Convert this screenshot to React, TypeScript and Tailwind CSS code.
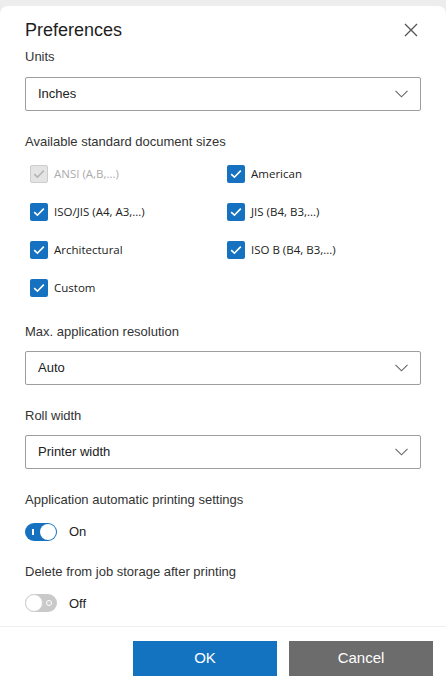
import React from "react";

const arial = { fontFamily: '"Liberation Sans", Arial, sans-serif' };
const segoe = { fontFamily: '"Open Sans", "Noto Sans", sans-serif' };

function Chevron() {
  return (
    <svg width="13" height="8" viewBox="0 0 13 8" fill="none">
      <path d="M0.5 0.8 L6.5 6.8 L12.5 0.8" stroke="#666" strokeWidth="1.1" />
    </svg>
  );
}

function Select({ value }: { value: string }) {
  return (
    <div className="flex h-[34px] items-center justify-between rounded-[2px] border border-[#9d9d9d] bg-white pl-[12px] pr-[12px]">
      <span className="text-[13px] text-[#222]" style={arial}>
        {value}
      </span>
      <Chevron />
    </div>
  );
}

function Check({ label, disabled }: { label: string; disabled?: boolean }) {
  return (
    <div className="flex h-[18px] items-center gap-[6px]">
      <div
        className={
          disabled
            ? "flex h-[18px] w-[18px] items-center justify-center rounded-[2px] border border-[#cdcdcd] bg-[#e4e4e4]"
            : "flex h-[18px] w-[18px] items-center justify-center rounded-[2px] bg-[#1672c0]"
        }
      >
        <svg width="12" height="10" viewBox="0 0 12 10" fill="none">
          <path
            d="M1.2 5.2 L4.4 8.2 L10.8 1.6"
            stroke={disabled ? "#b4b4b4" : "#ffffff"}
            strokeWidth="1.6"
          />
        </svg>
      </div>
      <span
        className={disabled ? "text-[11.5px] text-[#ababab]" : "text-[11.5px] text-[#222]"}
        style={segoe}
      >
        {label}
      </span>
    </div>
  );
}

function Toggle({ on }: { on: boolean }) {
  return (
    <div className="flex items-center gap-[12px]">
      {on ? (
        <div className="relative h-[18px] w-[32px] rounded-full bg-[#1672c0]">
          <div className="absolute left-[7px] top-[6px] h-[6px] w-[1.5px] bg-white" />
          <div className="absolute right-[1px] top-[1px] h-[16px] w-[16px] rounded-full bg-white" />
        </div>
      ) : (
        <div className="relative h-[18px] w-[32px] rounded-full bg-[#c9c9c9]">
          <div className="absolute right-[5px] top-[6px] h-[6px] w-[6px] rounded-full border border-white" />
          <div className="absolute left-0 top-0 h-[18px] w-[18px] rounded-full border border-[#cfcfcf] bg-white" />
        </div>
      )}
      <span className="text-[13px] text-[#222]" style={arial}>
        {on ? "On" : "Off"}
      </span>
    </div>
  );
}

function Label({ children, className }: { children: React.ReactNode; className: string }) {
  return (
    <div className={"h-[16px] text-[13px] leading-[16px] text-[#333] " + className} style={arial}>
      {children}
    </div>
  );
}

export default function App() {
  return (
    <div className="h-[688px] w-[446px] overflow-hidden bg-[#ededed] pt-[6px]">
      <div className="flex h-[682px] flex-col rounded-t-[8px] bg-white">
        <div className="flex flex-1 flex-col px-[25px] pt-[12px]">
          <div className="flex h-[24px] items-center justify-between">
            <h1 className="text-[18px] leading-[24px] text-[#1e1e1e]" style={arial}>
              Preferences
            </h1>
            <div className="flex w-[20px] items-center justify-center">
              <svg width="14" height="14" viewBox="0 0 14 14" fill="none">
                <path d="M1 1 L13 13 M13 1 L1 13" stroke="#555" strokeWidth="1.3" />
              </svg>
            </div>
          </div>

          <Label className="mt-[7px]">Units</Label>
          <div className="mt-[12px]">
            <Select value="Inches" />
          </div>

          <Label className="mt-[23px]">Available standard document sizes</Label>
          <div className="mt-[15px] grid grid-cols-[197px_1fr] gap-y-[20px] pl-[5px]">
            <Check label="ANSI (A,B,...)" disabled />
            <Check label="American" />
            <Check label="ISO/JIS (A4, A3,...)" />
            <Check label="JIS (B4, B3,...)" />
            <Check label="Architectural" />
            <Check label="ISO B (B4, B3,...)" />
            <Check label="Custom" />
          </div>

          <Label className="mt-[27px]">Max. application resolution</Label>
          <div className="mt-[11px]">
            <Select value="Auto" />
          </div>

          <Label className="mt-[23px]">Roll width</Label>
          <div className="mt-[11px]">
            <Select value="Printer width" />
          </div>

          <Label className="mt-[23px]">Application automatic printing settings</Label>
          <div className="mt-[14px]">
            <Toggle on />
          </div>

          <Label className="mt-[22px]">Delete from job storage after printing</Label>
          <div className="mt-[14px]">
            <Toggle on={false} />
          </div>
        </div>

        <div className="h-[1px] bg-[#eeeeee]" />
        <div className="flex justify-end gap-[12px] pb-[12px] pr-[13px] pt-[14px]">
          <button
            className="h-[35px] w-[144px] bg-[#1473c0] text-[15px] text-white"
            style={arial}
          >
            OK
          </button>
          <button
            className="h-[35px] w-[144px] bg-[#6c6c6c] text-[15px] text-white"
            style={arial}
          >
            Cancel
          </button>
        </div>
      </div>
    </div>
  );
}
